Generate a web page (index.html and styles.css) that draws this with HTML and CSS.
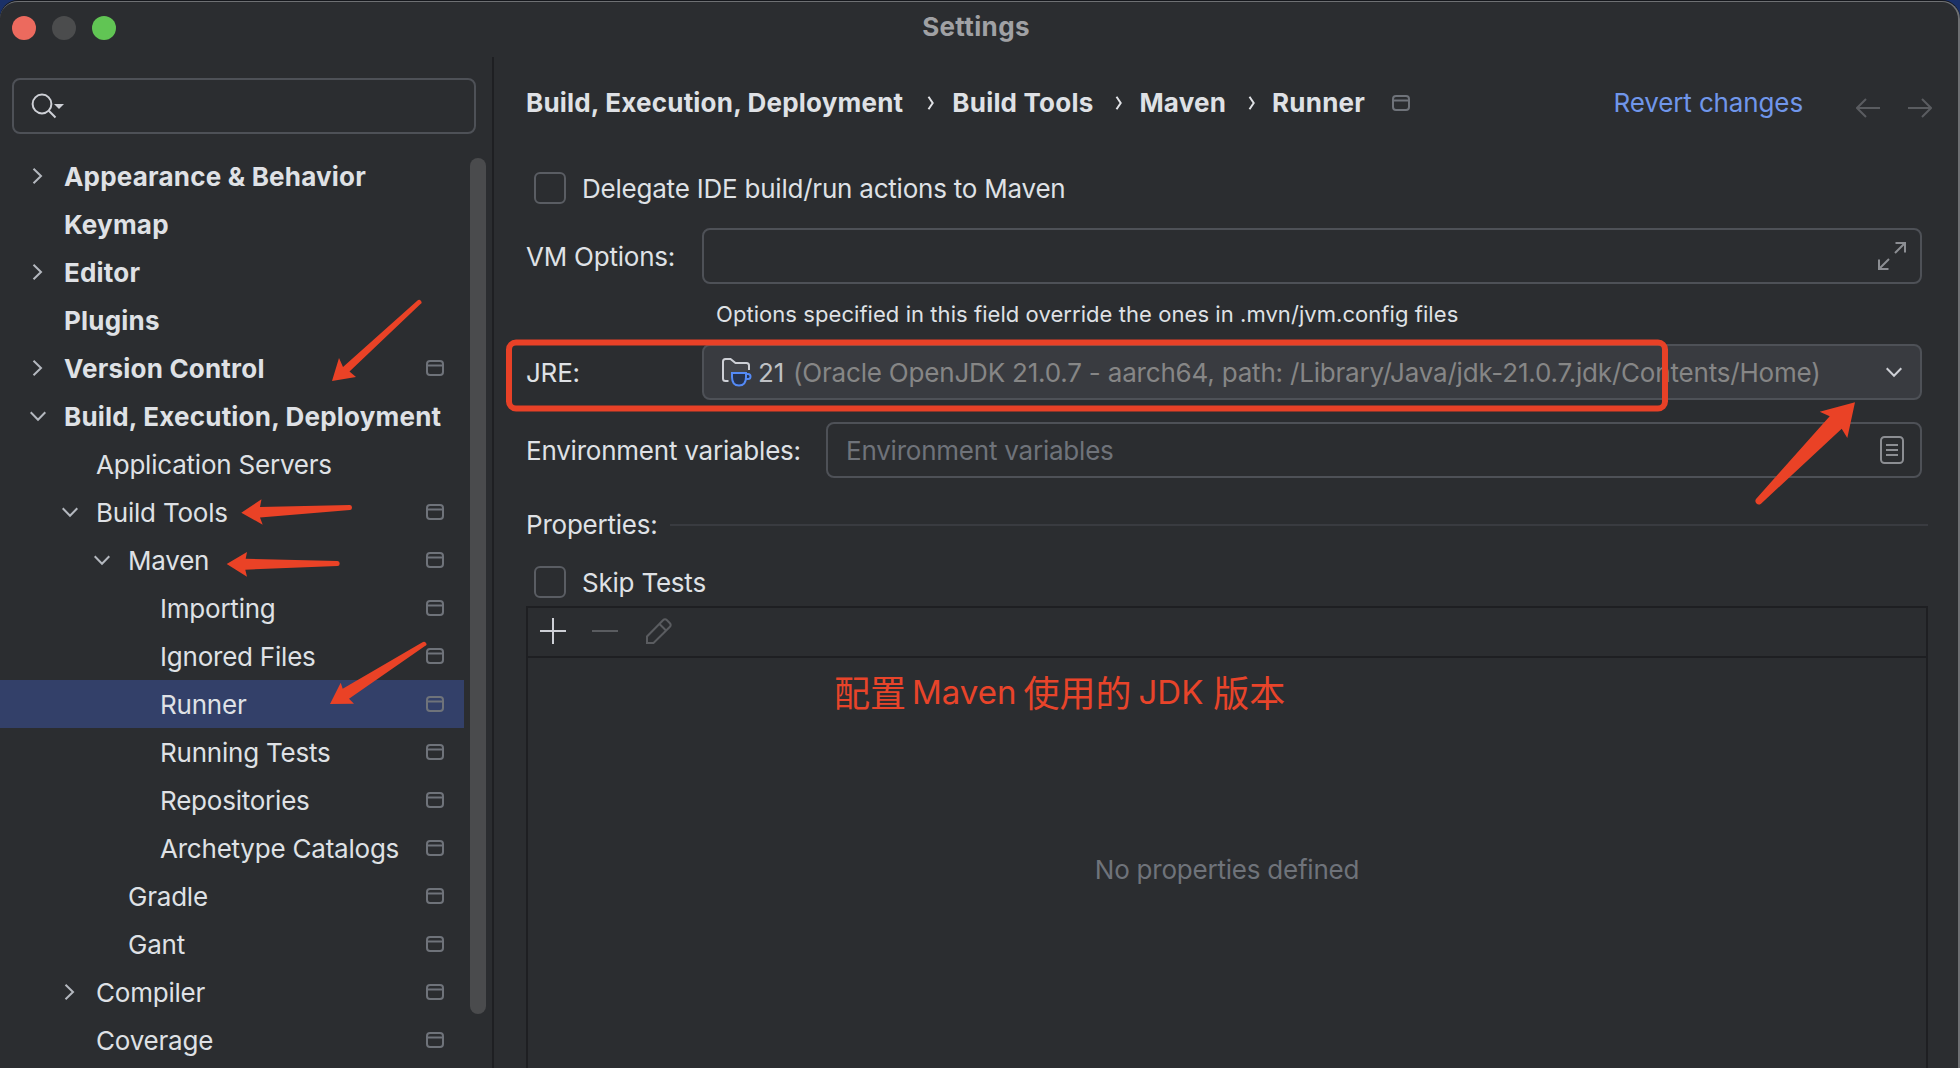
FILE: index.html
```html
<!DOCTYPE html>
<html lang="en">
<head>
<meta charset="utf-8">
<title>Settings</title>
<link rel="stylesheet" href="styles.css">
</head>
<body>
<svg class="defs" width="0" height="0" aria-hidden="true">
  <symbol id="scope" viewBox="0 0 18 16"><rect x="1" y="1" width="16" height="14" rx="3"/><path d="M1 5.500H17"/></symbol>
  <symbol id="right" viewBox="0 0 16 16"><path d="M3.500 .7 11 8 3.500 15.300"/></symbol>
  <symbol id="down" viewBox="0 0 16 16"><path d="M.7 4.200 8 11.700 15.300 4.200"/></symbol>
  <symbol id="sep" viewBox="0 0 8 14"><path d="M1.500 .8 5.700 7 1.500 13.200"/></symbol>
</svg>
<div class="window">
  <header class="titlebar">
    <div class="lights"><i class="light close"></i><i class="light min"></i><i class="light max"></i></div>
    <h1 class="title">Settings</h1>
  </header>
  <div class="body">
    <aside class="sidebar">
      <div class="search">
        <svg width="36" height="28" viewBox="0 0 36 28"><circle cx="12" cy="12" r="9.400"/><path d="M18.800 18.800 25.500 25.500"/><path class="fill" d="M24 12h10l-5 5z"/></svg>
      </div>
      <div class="tree-wrap">
        <ul class="tree">
          <li class="row top"><svg class="chev"><use href="#right"/></svg><span>Appearance &amp; Behavior</span></li>
          <li class="row top"><i class="chev"></i><span>Keymap</span></li>
          <li class="row top"><svg class="chev"><use href="#right"/></svg><span>Editor</span></li>
          <li class="row top"><i class="chev"></i><span>Plugins</span></li>
          <li class="row top"><svg class="chev"><use href="#right"/></svg><span>Version Control</span><svg class="scope"><use href="#scope"/></svg></li>
          <li class="row top"><svg class="chev"><use href="#down"/></svg><span>Build, Execution, Deployment</span></li>
          <li class="row l1"><i class="chev"></i><span>Application Servers</span></li>
          <li class="row l1"><svg class="chev"><use href="#down"/></svg><span>Build Tools</span><svg class="scope"><use href="#scope"/></svg></li>
          <li class="row l2"><svg class="chev"><use href="#down"/></svg><span>Maven</span><svg class="scope"><use href="#scope"/></svg></li>
          <li class="row l3"><i class="chev"></i><span>Importing</span><svg class="scope"><use href="#scope"/></svg></li>
          <li class="row l3"><i class="chev"></i><span>Ignored Files</span><svg class="scope"><use href="#scope"/></svg></li>
          <li class="row l3 selected"><i class="chev"></i><span>Runner</span><svg class="scope"><use href="#scope"/></svg></li>
          <li class="row l3"><i class="chev"></i><span>Running Tests</span><svg class="scope"><use href="#scope"/></svg></li>
          <li class="row l3"><i class="chev"></i><span>Repositories</span><svg class="scope"><use href="#scope"/></svg></li>
          <li class="row l3"><i class="chev"></i><span>Archetype Catalogs</span><svg class="scope"><use href="#scope"/></svg></li>
          <li class="row l2"><i class="chev"></i><span>Gradle</span><svg class="scope"><use href="#scope"/></svg></li>
          <li class="row l2"><i class="chev"></i><span>Gant</span><svg class="scope"><use href="#scope"/></svg></li>
          <li class="row l1"><svg class="chev"><use href="#right"/></svg><span>Compiler</span><svg class="scope"><use href="#scope"/></svg></li>
          <li class="row l1"><i class="chev"></i><span>Coverage</span><svg class="scope"><use href="#scope"/></svg></li>
        </ul>
        <div class="scrollbar"></div>
      </div>
    </aside>
    <main class="content">
      <div class="head">
        <nav class="crumbs">
          <span>Build, Execution, Deployment</span><svg class="sep wide"><use href="#sep"/></svg>
          <span>Build Tools</span><svg class="sep"><use href="#sep"/></svg>
          <span>Maven</span><svg class="sep"><use href="#sep"/></svg>
          <span>Runner</span><svg class="scope"><use href="#scope"/></svg>
        </nav>
        <a class="revert"><span>Revert changes</span></a>
        <svg class="nav" width="76" height="20" viewBox="0 0 76 20"><path d="M24 10H1M10 1 1 10l9 9M52 10H75M66 1l9 9-9 9"/></svg>
      </div>
      <label class="check first"><i class="box"></i><span>Delegate IDE build/run actions to Maven</span></label>
      <div class="field vm">
        <span class="name">VM Options:</span>
        <div class="input"><svg class="expand" width="30" height="30" viewBox="0 0 30 30"><path d="M18 12 28 2M18.500 2H28V11.500M12 18 2 28M2 18.500V28H11.500"/></svg></div>
      </div>
      <p class="hint"><span>Options specified in this field override the ones in .mvn/jvm.config files</span></p>
      <div class="field jre">
        <span class="name">JRE:</span>
        <div class="input combo">
          <svg class="jdk" width="34" height="32" viewBox="0 0 34 32"><path class="folder" d="M9.500 25H6.500Q4 25 4 22.500V5.500Q4 3 6.500 3H11.500L16.500 7H27.500Q30 7 30 9.500V14"/><path class="cup" d="M13 17H27V21Q27 29.500 20 29.500T13 21ZM27 18H29Q31.500 18 31.500 20.500T29 23H27"/></svg>
          <span class="ver">21</span><span class="path">(Oracle OpenJDK 21.0.7 - aarch64, path: /Library/Java/jdk-21.0.7.jdk/Contents/Home)</span>
          <svg class="chev drop"><use href="#down"/></svg>
        </div>
      </div>
      <div class="field env">
        <span class="name">Environment variables:</span>
        <div class="input"><span class="placeholder">Environment variables</span><svg class="list" width="24" height="28" viewBox="0 0 24 28"><rect x="1" y="1" width="22" height="26" rx="3.500"/><path d="M6 9H18M6 14H18M6 19H18"/></svg></div>
      </div>
      <div class="group"><span>Properties:</span><i class="rule"></i></div>
      <label class="check skip"><i class="box"></i><span>Skip Tests</span></label>
      <section class="table">
        <div class="toolbar">
          <svg width="26" height="26" viewBox="0 0 26 26"><path class="on" d="M0 13H26M13 0V26"/></svg>
          <svg width="26" height="26" viewBox="0 0 26 26"><path d="M0 13H26"/></svg>
          <svg class="pencil" width="26" height="26" viewBox="0 0 26 26"><path d="M1 25V18.500L17 2.300Q19 .3 21 2.300L23.700 5Q25.700 7 23.700 9L7.500 25ZM13.500 6 20 12.500"/></svg>
        </div>
        <div class="note"><span class="zh">配置</span><span class="la">Maven</span><span class="zh">使用的</span><span class="la jdk-word">JDK</span><span class="zh">版本</span></div>
        <div class="empty"><span>No properties defined</span></div>
      </section>
    </main>
  </div>
  <svg class="marks" width="1960" height="1068" viewBox="0 0 1960 1068">
    <rect x="509" y="342.500" width="1156" height="66" rx="7"/>
    <path d="M332 381 339 358 343 367 417.500 300.500Q419.500 299 421 301T420.500 304L349.500 371.500 356 377Z"/>
    <path d="M241.300 512.700 261.500 499.300 260 507 350 505Q352 505 352 507.500T350 510L260 517.500 262.700 524.700Z"/>
    <path d="M226.700 564 247 552 245.700 558.700 337.500 561Q339.700 561 339.700 563.500T337.500 566L245.300 569.700 247 576.700Z"/>
    <path d="M330 704 340.700 682.700 342.700 688.700 422.500 642.200Q424.500 641 426 643T425 646L349 698.700 354 703.700Z"/>
    <path d="M1855 402.300 1819.700 411.700 1829.700 416.300 1756 499Q1754.500 501.500 1756.500 503.500T1761 503.700L1841.700 428.700 1847.300 438Z"/>
  </svg>
</div>
</body>
</html>
```
FILE: styles.css
```css
* { box-sizing: border-box; }
html, body { margin: 0; height: 100%; }
body {
  overflow: hidden;
  background: #1b3168;
  color: #dfe1e5;
  font: 400 26px/32px Inter, "Noto Sans CJK SC", sans-serif;
  letter-spacing: -.22px;
}
h1, p, ul { margin: 0; padding: 0; list-style: none; }
svg { display: block; flex: none; fill: none; stroke: #ced0d6; stroke-width: 2; }
.defs { position: absolute; }
span { white-space: nowrap; }

.window {
  position: relative;
  display: flex;
  flex-direction: column;
  height: calc(100vh - 1px);
  margin-top: 1px;
  border: solid #6e7073;
  border-width: 1px 2px 0 0;
  border-radius: 18px 18px 0 0;
  background: #2b2d30;
  box-shadow: 0 -1px 0 #15171c;
  overflow: hidden;
}
.titlebar { display: flex; align-items: center; height: 55px; padding: 0 0 3px 12px; flex: none; }
.lights { display: flex; gap: 16px; width: 104px; }
.light { width: 24px; height: 24px; border-radius: 50%; }
.close { background: #ec6a5e; }
.min { background: #4b4c4d; }
.max { background: #61c554; }
.title { flex: 1; padding: 0 122px 2px 0; text-align: center; font-size: 26px; font-weight: 700; letter-spacing: .35px; color: #a0a1a4; }
.body { display: flex; flex: 1; min-height: 0; }

.sidebar { width: 494px; flex: none; border-right: 2px solid #1e1f22; padding-top: 21px; }
.search {
  display: flex;
  align-items: center;
  width: 464px;
  height: 56px;
  margin-left: 12px;
  padding: 0 16px;
  border: 2px solid #4e5157;
  border-radius: 8px;
}
.search .fill { fill: #ced0d6; stroke: none; }
.tree-wrap { display: flex; padding-top: 18px; }
.tree { width: 464px; }
.row { display: flex; align-items: center; height: 48px; padding: 0 20px 0 30px; }
.row > span { margin: 2px auto 0 18px; }
.top { font-weight: 700; letter-spacing: .2px; }
.l1 { padding-left: 62px; }
.l2 { padding-left: 94px; }
.l3 { padding-left: 126px; }
.selected { background: #334069; }
.chev { width: 16px; height: 16px; flex: none; stroke: #b4b8bf; }
.scope { width: 18px; height: 16px; stroke: #6f737a; }
.scrollbar { width: 16px; height: 856px; margin: 6px 0 0 6px; border-radius: 8px; background: #4a4b4d; }

.content { flex: 1; min-width: 0; padding: 21px 30px 0 32px; display: flex; flex-direction: column; }
.content > * { flex: none; }
.head { display: flex; align-items: center; height: 50px; }
.crumbs { display: flex; align-items: center; font-weight: 700; letter-spacing: .2px; }
.sep { width: 8px; height: 14px; margin: 0 16px 0 22px; stroke: #dfe1e5; }
.sep.wide { margin: 0 17px 0 24px; }
.crumbs .scope { margin-left: 27px; }
.revert { margin-left: auto; color: #7096ea; letter-spacing: -.13px; }
.nav { margin: 10px -4px 0 53px; stroke: #5a5c60; }
.check { display: flex; align-items: center; gap: 16px; height: 32px; padding-left: 8px; }
.check span, .name { padding-top: 2px; }
.check.first { margin-top: 44px; }
.box { width: 32px; height: 32px; border: 2px solid #5a5d63; border-radius: 6px; }
.field { display: flex; align-items: center; height: 56px; padding-right: 6px; }
.vm { margin-top: 24px; }
.name { width: 176px; flex: none; }
.input {
  display: flex;
  align-items: center;
  flex: 1;
  height: 56px;
  padding: 0 14px 0 18px;
  border: 2px solid #4e5157;
  border-radius: 8px;
}
.expand { margin: 0 -1px 0 auto; stroke: #8c8e93; }
.hint { height: 60px; padding: 14px 0 0 190px; font-size: 22px; letter-spacing: .06px; }
.combo { background: #393b40; padding-left: 15px; }
.jdk .folder { stroke: #ced0d6; fill: #43454a; }
.jdk .cup { stroke: #548af7; fill: #25324d; }
.ver { padding-top: 2px; margin-left: 5px; color: #bfc1c5; }
.path { padding-top: 2px; margin-left: 9px; color: #868686; letter-spacing: -.19px; }
.drop { margin: 0 4px 0 auto; stroke: #ced0d6; }
.env { margin-top: 22px; }
.env .name { width: 300px; }
.placeholder { padding-top: 2px; color: #6f737a; }
.list { margin: 0 2px 0 auto; stroke: #8c8e93; }
.group { display: flex; align-items: center; height: 32px; margin-top: 31px; }
.rule { flex: 1; height: 2px; margin-left: 12px; background: #393b40; }
.skip { margin-top: 25px; }
.content > .table { flex: 1; min-height: 0; margin: 8px 0 0; border: solid #1e1f22; border-width: 2px 2px 0; }
.toolbar { display: flex; align-items: center; gap: 26px; height: 50px; padding: 0 0 2px 12px; border-bottom: 2px solid #1e1f22; }
.toolbar svg { stroke: #5a5c60; }
.toolbar .on { stroke: #ced0d6; }
.toolbar .pencil { margin-left: 2px; }
.note { display: flex; align-items: center; height: 48px; margin: 9px 0 0 306px; color: #e8442a; letter-spacing: 0; }
.zh { font: 400 36px/48px "Noto Sans CJK SC", sans-serif; }
.la { margin: 1px 7px 0 6px; font-size: 33px; }
.jdk-word { margin: 1px 10px 0 7px; }
.empty { margin-top: 139px; text-align: center; color: #6f737a; }
.marks { position: absolute; left: 0; top: -2px; fill: #ea4226; stroke: none; }
.marks rect { fill: none; stroke: #e84127; stroke-width: 6; }
```
